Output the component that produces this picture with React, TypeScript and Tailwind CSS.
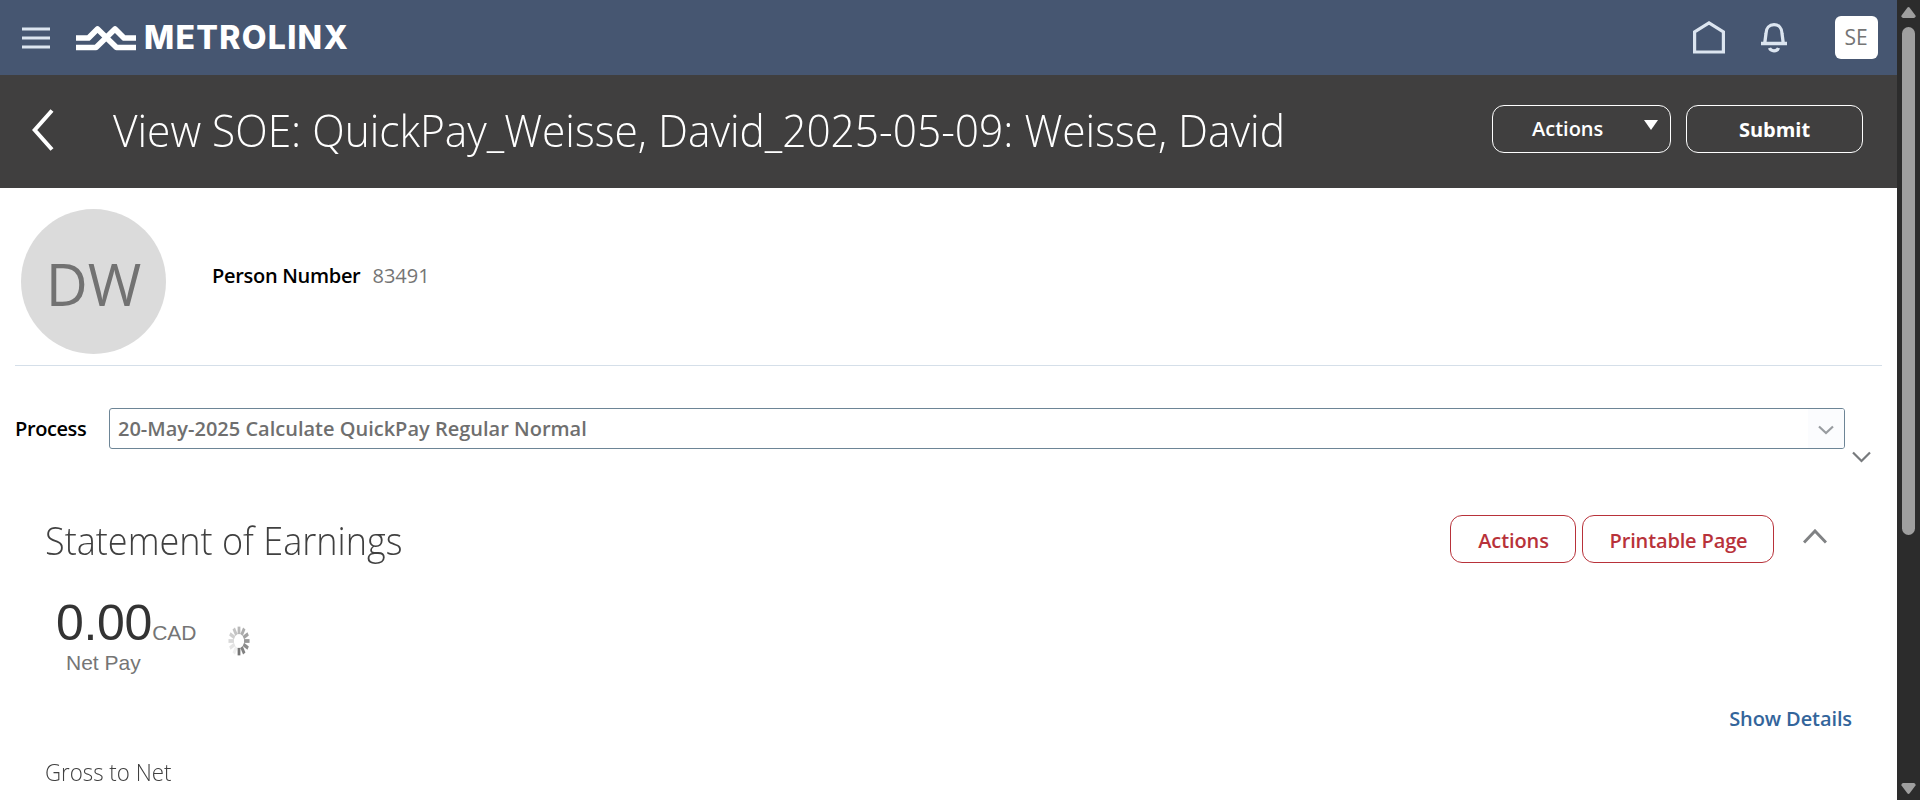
import React from "react";

const ticks = Array.from({ length: 12 }, (_, i) => i);

function Chevron({ w, h, className, sw = 2.2 }: { w: number; h: number; className: string; sw?: number }) {
  return (
    <svg width={w} height={h} viewBox={`0 0 ${w} ${h}`} fill="none" stroke="currentColor" strokeWidth={sw} className={className}>
      <path d={`M1 1.5 L${w / 2} ${h - 2} L${w - 1} 1.5`} />
    </svg>
  );
}

function TopBar() {
  return (
    <header className="flex h-[75px] items-center bg-[#465671] text-[#dce5f0]">
      <svg width="28" height="23" viewBox="0 0 28 23" className="mt-px ml-[22px]" fill="currentColor">
        <rect y="0.5" width="28" height="3" />
        <rect y="9.5" width="28" height="3" />
        <rect y="18.5" width="28" height="3" />
      </svg>
      <svg width="60" height="26" viewBox="0 0 60 26" className="ml-[26px]" fill="none" stroke="#fff" strokeWidth="5.700">
        <path d="M0 13H12.500L21.500 4L40.500 22.500H60" strokeLinejoin="round" />
        <path d="M0 22.500H20L39 4L48 13H60" strokeLinejoin="round" />
      </svg>
      <span className="ml-[8px] font-['Inter'] text-[32px] leading-[40px] font-extrabold tracking-[1.3px] text-white">METROLINX</span>
      <div className="ml-auto flex items-center pr-[19px]">
        <svg width="32" height="33" viewBox="0 0 32 33" fill="none" stroke="currentColor" strokeWidth="3.200">
          <path d="M1.600 31V11L16 2L30.400 11V31Z" />
        </svg>
        <svg width="26" height="30" viewBox="0 0 26 30" className="ml-9" fill="none" stroke="currentColor" strokeWidth="3.300">
          <path d="M0 20.500H26M3.700 20.500L5 10.500C5 5 8.500 1.700 13 1.700S21 5 21 10.500L22.300 20.500" />
          <path d="M8.500 25C10 28.700 16 28.700 17.500 25" />
        </svg>
        <div className="ml-12 flex size-[43px] items-center justify-center rounded-md bg-white pr-px font-['Open_Sans'] text-[21px] text-[#757575]">SE</div>
      </div>
    </header>
  );
}

function TitleBar() {
  return (
    <div className="flex h-[113px] items-center bg-[#403f3f] pr-[34px] text-white">
      <svg width="22" height="42" viewBox="0 0 22 42" className="mb-[3px] ml-8" fill="none" stroke="currentColor" strokeWidth="4">
        <path d="M20 1.500L2.700 21L20 40.500" />
      </svg>
      <h1 className="ml-[59px] origin-left scale-x-[0.943] pb-1 text-[45px] leading-[60px] font-light whitespace-nowrap">
        View SOE: QuickPay_Weisse, David_2025-05-09: Weisse, David
      </h1>
      <div className="ml-auto flex gap-[15px] pb-[5px] text-[20px] font-semibold">
        <button className="flex h-12 w-[179px] items-center justify-between rounded-xl border border-white pr-3 pl-[39px]">
          Actions
          <svg width="14" height="10" viewBox="0 0 14 10" className="mb-2" fill="currentColor">
            <path d="M0 0H14L7 10Z" />
          </svg>
        </button>
        <button className="h-12 w-[177px] rounded-xl border border-white pt-0.5 font-bold">Submit</button>
      </div>
    </div>
  );
}

function Spinner() {
  return (
    <svg width="22" height="30" viewBox="0 0 24 24" preserveAspectRatio="none" className="blur-[0.7px]">
      {ticks.map((i) => (
        <line key={i} x1="12" y1="0.5" x2="12" y2="6.500" stroke="#222" strokeWidth="3" opacity={0.07 + ((i + 5) % 12) * 0.05} transform={`rotate(${i * 30} 12 12)`} />
      ))}
    </svg>
  );
}

function ScrollBar() {
  return (
    <div className="flex h-full w-[23px] flex-col items-center bg-[#2c2c2c] text-[#9f9f9f]">
      <svg width="15" height="11" viewBox="0 0 15 11" className="mt-[7px]" fill="currentColor">
        <path d="M6.300 0.800Q7.500-.6 8.700.8L14.500 8.500Q15 10.500 13 11H2Q0 10.500.5 8.500Z" />
      </svg>
      <div className="mt-[9px] h-[508px] w-[13px] rounded-full bg-[#9f9f9f]" />
      <svg width="15" height="11" viewBox="0 0 15 11" className="mt-auto mb-[6px] rotate-180" fill="currentColor">
        <path d="M6.300 0.800Q7.500-.6 8.700.8L14.500 8.500Q15 10.500 13 11H2Q0 10.500.5 8.500Z" />
      </svg>
    </div>
  );
}

export default function App() {
  return (
    <div className="flex h-[800px] w-[1920px] overflow-hidden bg-white font-['Open_Sans',sans-serif]">
      <main className="w-[1897px]">
        <TopBar />
        <TitleBar />
        <section className="mx-[15px] flex h-[178px] items-center border-b border-[#d5dfe9] pt-[10px] pl-[6px]">
          <div className="flex size-[145px] items-center justify-center rounded-full bg-[#dbdbdb] pt-[3px] text-[58px] text-[#727272]">DW</div>
          <div className="ml-[46px] flex gap-3 pb-[12px] text-[20px] whitespace-nowrap">
            <span className="font-semibold tracking-[-0.3px] text-black">Person Number</span>
            <span className="font-medium text-[#757575]">83491</span>
          </div>
        </section>
        <section className="flex h-[106px] items-start pt-[42px] pl-[15px] text-[20px] font-semibold">
          <label className="w-[94px] pt-[6px] tracking-[-0.4px] text-black">Process</label>
          <div className="flex h-[41px] w-[1736px] items-center rounded-[3px] border border-[#6d8596] pl-[8px] text-[#6f6f6f]">
            <span>20-May-2025 Calculate QuickPay Regular Normal</span>
            <div className="ml-auto flex h-full w-[36px] items-center justify-center rounded-r-[2px] bg-[#fbfcfe]">
              <Chevron w={16} h={10} className="mt-0.5 text-[#989ca0]" />
            </div>
          </div>
          <Chevron w={19} h={12} className="mt-[43px] ml-[7px] text-[#777a7d]" />
        </section>
        <section className="flex h-[134px] items-center pl-[45px]">
          <h2 className="origin-left scale-x-[0.924] pt-[2px] text-[39px] font-light text-[#404040]">Statement of Earnings</h2>
          <div className="ml-auto flex gap-[6px] text-[20px] font-semibold text-[#b8323a]">
            <button className="h-12 w-[126px] rounded-xl border border-[#b8323a] pt-1 pl-px tracking-[-0.1px]">Actions</button>
            <button className="h-12 w-[192px] rounded-xl border border-[#b8323a] pt-1 pl-px tracking-[-0.15px]">Printable Page</button>
          </div>
          <Chevron w={24} h={15} sw={3} className="mr-[70px] mb-[5px] ml-[29px] rotate-180 text-[#808284]" />
        </section>
        <section className="flex h-[82px] items-start pl-[56px] font-['Liberation_Sans',sans-serif] text-[#757575]">
          <div className="-mt-px">
            <div className="flex h-9 items-baseline leading-[36px]">
              <span className="text-[50px] tracking-[-0.3px] text-[#333]">0.00</span>
              <span className="text-[21px] leading-none">CAD</span>
            </div>
            <div className="pt-[10px] pl-[10px] text-[21px] leading-6">Net Pay</div>
          </div>
          <div className="pt-[20px] pl-[32px]"><Spinner /></div>
        </section>
        <div className="flex justify-end pt-[16px] pr-[45px] text-[20px] leading-[30px] font-semibold tracking-[-0.1px] text-[#33659b]">Show Details</div>
        <h3 className="origin-left pt-[20px] pl-[45px] text-[24px] font-light text-[#404040]">
          <span className="inline-block origin-left scale-x-[0.928]">Gross to Net</span>
        </h3>
      </main>
      <ScrollBar />
    </div>
  );
}
